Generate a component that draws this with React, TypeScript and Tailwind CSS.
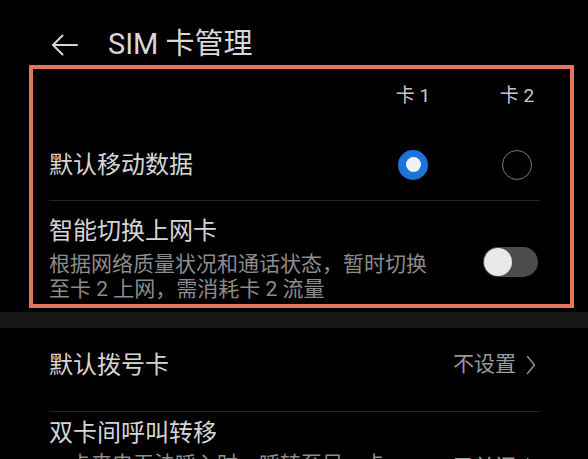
import React from "react"

const font = { fontFamily: 'Roboto, "Noto Sans CJK SC", sans-serif' }

function BackArrow() {
  return (
    <svg width="28" height="22" viewBox="0 0 28 22" fill="none" stroke="#d4d4d4" strokeWidth="2" strokeLinecap="round" strokeLinejoin="round">
      <path d="M2 11 H26" />
      <path d="M11.5 1.5 L2 11 L11.5 20.5" />
    </svg>
  )
}

function Chevron() {
  return (
    <svg width="10" height="20" viewBox="0 0 10 20" fill="none" stroke="#8e8e8e" strokeWidth="1.5" strokeLinecap="round" strokeLinejoin="round">
      <path d="M1.5 1.5 L8.5 10 L1.5 18.5" />
    </svg>
  )
}

function Radio({ checked }: { checked?: boolean }) {
  if (checked) {
    return (
      <div className="flex h-[30px] w-[30px] items-center justify-center rounded-full bg-[#1c74d8]">
        <div className="h-[15px] w-[15px] rounded-full bg-[#eef2f7]" />
      </div>
    )
  }
  return <div className="h-[30px] w-[30px] rounded-full border-[1.5px] border-[#7c7c7c]" />
}

function Toggle() {
  return (
    <div className="flex h-[30px] w-[55px] items-center rounded-full bg-[#4c4c4c] pl-[1px]">
      <div className="h-[28px] w-[28px] rounded-full bg-[#e8e8e8]" />
    </div>
  )
}

export default function App() {
  return (
    <div className="h-[459px] w-[588px] overflow-hidden bg-black" style={font}>
      {/* Header */}
      <header className="flex h-[65px] items-center pl-[51px] pt-[24px]">
        <BackArrow />
        <h1 className="ml-[29px] text-[29px] leading-none text-[#d8d8d8]">SIM 卡管理</h1>
      </header>

      {/* Highlighted section */}
      <section className="ml-[29px] w-[545px] border-4 border-[#e5765c] pl-[16px] pr-[30px]">
        <div className="flex h-[58px] items-center justify-end pb-[4px]">
          <div className="flex gap-[58px] text-[19px] text-[#c8c8c8]">
            <span className="w-[46px] text-center">卡 1</span>
            <span className="w-[46px] text-center">卡 2</span>
          </div>
        </div>
        <div className="flex h-[74px] items-center justify-between border-b border-[#242424] pt-[2px]">
          <span className="text-[24px] text-[#d6d6d6]">默认移动数据</span>
          <div className="flex gap-[58px]">
            <div className="flex w-[46px] justify-center">
              <Radio checked />
            </div>
            <div className="flex w-[46px] justify-center">
              <Radio />
            </div>
          </div>
        </div>
        <div className="flex items-center justify-between pb-[2px] pt-[15px]">
          <div>
            <div className="text-[24px] leading-[30px] text-[#d6d6d6]">智能切换上网卡</div>
            <div className="mt-[6px] text-[21px] leading-[25px] text-[#8c8c8c]">
              <div>根据网络质量状况和通话状态，暂时切换</div>
              <div>至卡 2 上网，需消耗卡 2 流量</div>
            </div>
          </div>
          <div className="mr-[2px] mt-[6px]">
            <Toggle />
          </div>
        </div>
      </section>

      {/* Section gap */}
      <div className="mt-[4px] h-[16px] bg-[#171717]" />

      {/* List */}
      <div className="pl-[49px] pr-[48px]">
        <div className="flex h-[84px] items-center justify-between border-b border-[#242424] pb-[10px]">
          <span className="text-[24px] text-[#d6d6d6]">默认拨号卡</span>
          <div className="mr-[4px] flex items-center gap-[10px]">
            <span className="text-[21px] text-[#9a9a9a]">不设置</span>
            <Chevron />
          </div>
        </div>
        <div className="flex items-start justify-between pt-[6px]">
          <div>
            <div className="text-[24px] leading-[30px] text-[#d6d6d6]">双卡间呼叫转移</div>
            <div className="mt-[4px] text-[21px] leading-[25px] text-[#8c8c8c]">一卡来电无法呼入时，呼转至另一卡</div>
          </div>
          <div className="mr-[4px] flex items-center gap-[10px] pt-[34px]">
            <span className="text-[21px] leading-[30px] text-[#9a9a9a]">已关闭</span>
            <Chevron />
          </div>
        </div>
      </div>
    </div>
  )
}
